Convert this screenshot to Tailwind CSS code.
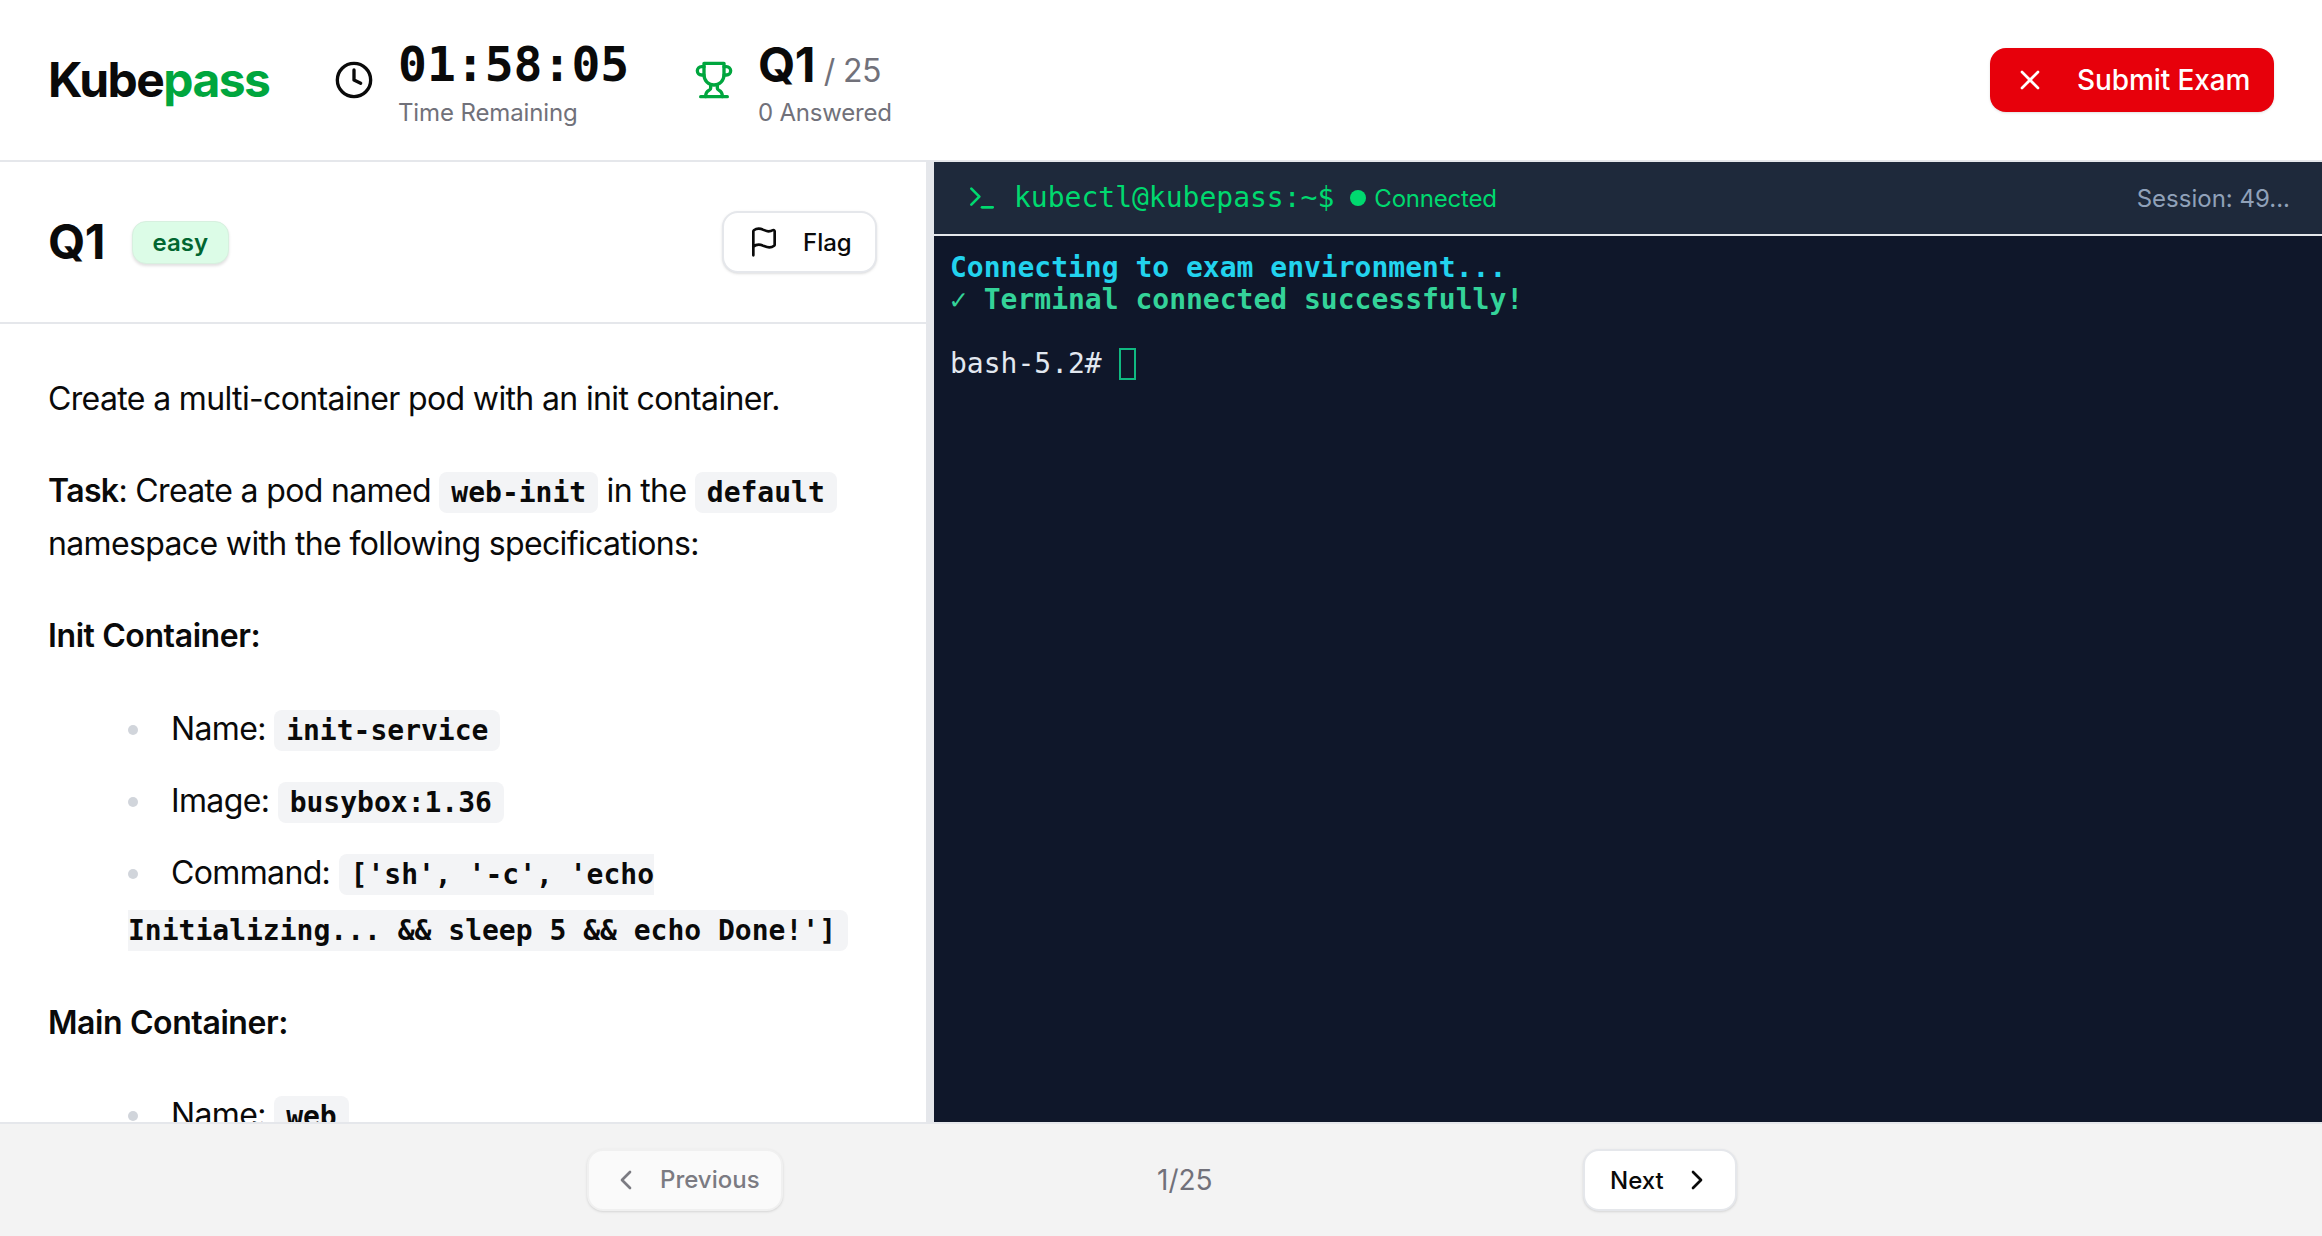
<!DOCTYPE html>
<html lang="en">
<head>
    <meta charset="UTF-8">
    <title>Kubepass Exam</title>
    <script src="https://cdn.jsdelivr.net/npm/@tailwindcss/browser@4"></script>
</head>
<body class="h-screen overflow-hidden flex flex-col bg-white text-[#0a0a0a] font-['Inter',sans-serif]">
    <!-- Header -->
    <header class="h-[162px] shrink-0 border-b-2 border-[#e5e7eb] flex items-center justify-between pl-12 pr-12">
        <div class="flex items-center">
            <div class="text-[48px] font-bold tracking-[-1.6px] w-[286px]">Kube<span class="text-[#00a63e]">pass</span></div>
            <div class="flex items-center gap-6 w-[360px]">
                <svg class="w-10 h-10" viewBox="0 0 24 24" fill="none" stroke="currentColor" stroke-width="2" stroke-linecap="round" stroke-linejoin="round"><circle cx="12" cy="12" r="10"/><polyline points="12 6 12 12 16 14"/></svg>
                <div>
                    <div class="font-['DejaVu_Sans_Mono',monospace] font-bold text-[48px] leading-[64px]">01:58:05</div>
                    <div class="text-[24px] leading-8 tracking-[-0.12px] text-[#71717a] pt-px">Time Remaining</div>
                </div>
            </div>
            <div class="flex items-center gap-6">
                <svg class="w-10 h-10 text-[#00a63e]" viewBox="0 0 24 24" fill="none" stroke="currentColor" stroke-width="2" stroke-linecap="round" stroke-linejoin="round"><path d="M6 9H4.5a2.5 2.5 0 0 1 0-5H6"/><path d="M18 9h1.5a2.5 2.5 0 0 0 0-5H18"/><path d="M4 22h16"/><path d="M10 14.66V17c0 .55-.47.98-.97 1.21C7.85 18.75 7 20.24 7 22"/><path d="M14 14.66V17c0 .55.47.98.97 1.21C16.15 18.75 17 20.24 17 22"/><path d="M18 2H6v7a6 6 0 0 0 12 0V2Z"/></svg>
                <div>
                    <div class="h-16 pt-[9px] flex items-baseline gap-[9px]"><span class="text-[48px] leading-[48px] font-bold tracking-[-0.6px]">Q1</span><span class="text-[32px] leading-8 tracking-[-0.64px] text-[#71717a]">/ 25</span></div>
                    <div class="text-[24px] leading-8 tracking-[-0.2px] text-[#71717a] pt-px">0 Answered</div>
                </div>
            </div>
        </div>
        <button class="h-16 w-[284px] rounded-2xl bg-[#e7000b] text-white shadow-sm flex items-center pl-[24px] gap-[31px] text-[28px] font-medium tracking-[-0.1px]">
            <svg class="w-8 h-8" viewBox="0 0 24 24" fill="none" stroke="currentColor" stroke-width="2" stroke-linecap="round" stroke-linejoin="round"><path d="M18 6 6 18"/><path d="m6 6 12 12"/></svg>
            Submit Exam
        </button>
    </header>

    <main class="flex-1 flex min-h-0">
        <!-- Question panel -->
        <section class="w-[934px] shrink-0 border-r-[8px] border-[#e5e7eb] flex flex-col overflow-hidden">
            <div class="h-[162px] shrink-0 border-b-2 border-[#e5e7eb] flex items-center justify-between pl-12 pr-[49px]">
                <div class="flex items-center gap-[27px]">
                    <span class="text-[48px] font-bold tracking-[-0.6px]">Q1</span>
                    <span class="h-[43px] w-[97px] flex items-center justify-center rounded-[14px] bg-[#dcfce7] border border-[#d7f0df] text-[#016630] text-[24px] font-semibold pt-px shadow-[0_2px_3px_rgba(0,0,0,0.12)]">easy</span>
                </div>
                <button class="h-[62px] w-[155px] rounded-2xl bg-white border-2 border-[#e5e7eb] shadow-sm flex items-center pl-6 gap-[23px] text-[24px] font-medium">
                    <svg class="w-8 h-8" viewBox="0 0 24 24" fill="none" stroke="currentColor" stroke-width="2" stroke-linecap="round" stroke-linejoin="round"><path d="M4 22V4a1 1 0 0 1 .4-.8A6 6 0 0 1 8 2c3 0 5 2 7.333 2q2 0 3.067-.8A1 1 0 0 1 20 4v10a1 1 0 0 1-.4.8A6 6 0 0 1 16 16c-3 0-5-2-8-2a6 6 0 0 0-4 1.528"/></svg>
                    <span class="pt-px">Flag</span>
                </button>
            </div>
            <div class="flex-1 overflow-hidden pl-12 pr-8 pt-[49px] text-[32px] leading-[51.2px] tracking-[-0.64px]">
                <p class="mb-[41px]">Create a multi-container pod with an init container.</p>
                <p class="mb-[40px]"><strong class="font-semibold">Task</strong>: Create a pod named <code class="font-['DejaVu_Sans_Mono',monospace] font-bold tracking-normal text-[28px] bg-[#f3f4f6] rounded-lg px-3 py-1">web-init</code> in the <code class="font-['DejaVu_Sans_Mono',monospace] font-bold tracking-normal text-[28px] bg-[#f3f4f6] rounded-lg px-3 py-1">default</code> namespace with the following specifications:</p>
                <p class="mb-[41px] font-semibold tracking-[-0.4px]">Init Container:</p>
                <ul class="list-disc list-inside pl-20 marker:text-[#d1d5db] leading-[54px] mb-[39px]">
                    <li class="mb-4">Name: <code class="font-['DejaVu_Sans_Mono',monospace] font-bold tracking-normal text-[28px] bg-[#f3f4f6] rounded-lg px-3 py-1">init-service</code></li>
                    <li class="mb-4">Image: <code class="font-['DejaVu_Sans_Mono',monospace] font-bold tracking-normal text-[28px] bg-[#f3f4f6] rounded-lg px-3 py-1">busybox:1.36</code></li>
                    <li class="mb-4">Command: <code class="font-['DejaVu_Sans_Mono',monospace] font-bold tracking-normal text-[28px] bg-[#f3f4f6] rounded-lg px-3 py-1">['sh', '-c', 'echo Initializing... &amp;&amp; sleep 5 &amp;&amp; echo Done!']</code></li>
                </ul>
                <p class="mb-[40px] font-semibold tracking-[-0.4px]">Main Container:</p>
                <ul class="list-disc list-inside pl-20 marker:text-[#d1d5db] leading-[54px]">
                    <li class="mb-4">Name: <code class="font-['DejaVu_Sans_Mono',monospace] font-bold tracking-normal text-[28px] bg-[#f3f4f6] rounded-lg px-3 py-1">web</code></li>
                </ul>
            </div>
        </section>

        <!-- Terminal -->
        <section class="flex-1 flex flex-col bg-[#0f172a] min-w-0">
            <div class="h-[74px] shrink-0 bg-[#1e293b] border-b-2 border-[#e5e7eb] flex items-center justify-between pl-8 pr-8">
                <div class="flex items-center text-[#00d96f]">
                    <svg class="w-8 h-8 mr-4" viewBox="0 0 24 24" fill="none" stroke="currentColor" stroke-width="2" stroke-linecap="round" stroke-linejoin="round"><polyline points="4 17 10 11 4 5"/><line x1="12" x2="20" y1="19" y2="19"/></svg>
                    <span class="font-['DejaVu_Sans_Mono',monospace] text-[28px]">kubectl@kubepass:~$</span>
                    <span class="w-4 h-4 rounded-full bg-[#00d96f] ml-4 mr-2"></span>
                    <span class="text-[24px] tracking-[-0.2px] pt-[2px]">Connected</span>
                </div>
                <span class="text-[24px] text-[#90a1b9] pt-[2px]">Session: 49...</span>
            </div>
            <div class="flex-1 pl-4 pt-4 font-['DejaVu_Sans_Mono',monospace] text-[28px] leading-8">
                <div class="font-bold text-[#22d3ee]">Connecting to exam environment...</div>
                <div class="font-bold text-[#34d399]">✓ Terminal connected successfully!</div>
                <div class="h-8"></div>
                <div class="text-[#e2e8f0] flex items-center">bash-5.2#<span class="ml-[17px] w-[17px] h-8 border-2 border-[#10b981]"></span></div>
            </div>
        </section>
    </main>

    <!-- Footer -->
    <footer class="h-[114px] shrink-0 border-t-2 border-[#e5e7eb] bg-[#f3f3f3] flex items-center">
        <div class="w-[1157px] pl-[587px]">
            <button class="h-[62px] w-[196px] rounded-2xl bg-[#fafafa] border-2 border-[#f0f0f0] shadow-sm flex items-center pl-[21px] gap-[18px] text-[24px] font-medium text-[#7b7b82]">
                <svg class="w-8 h-8" viewBox="0 0 24 24" fill="none" stroke="currentColor" stroke-width="2" stroke-linecap="round" stroke-linejoin="round"><path d="m15 18-6-6 6-6"/></svg>
                Previous
            </button>
        </div>
        <div class="w-[426px] text-[28px] text-[#71717a]">1/25</div>
        <button class="h-[62px] w-[154px] rounded-2xl bg-white border-2 border-[#e5e7eb] shadow-sm flex items-center pl-[25px] gap-[17px] text-[24px] font-medium">
            <span class="pt-px">Next</span>
            <svg class="w-8 h-8" viewBox="0 0 24 24" fill="none" stroke="currentColor" stroke-width="2" stroke-linecap="round" stroke-linejoin="round"><path d="m9 18 6-6-6-6"/></svg>
        </button>
    </footer>
</body>
</html>
